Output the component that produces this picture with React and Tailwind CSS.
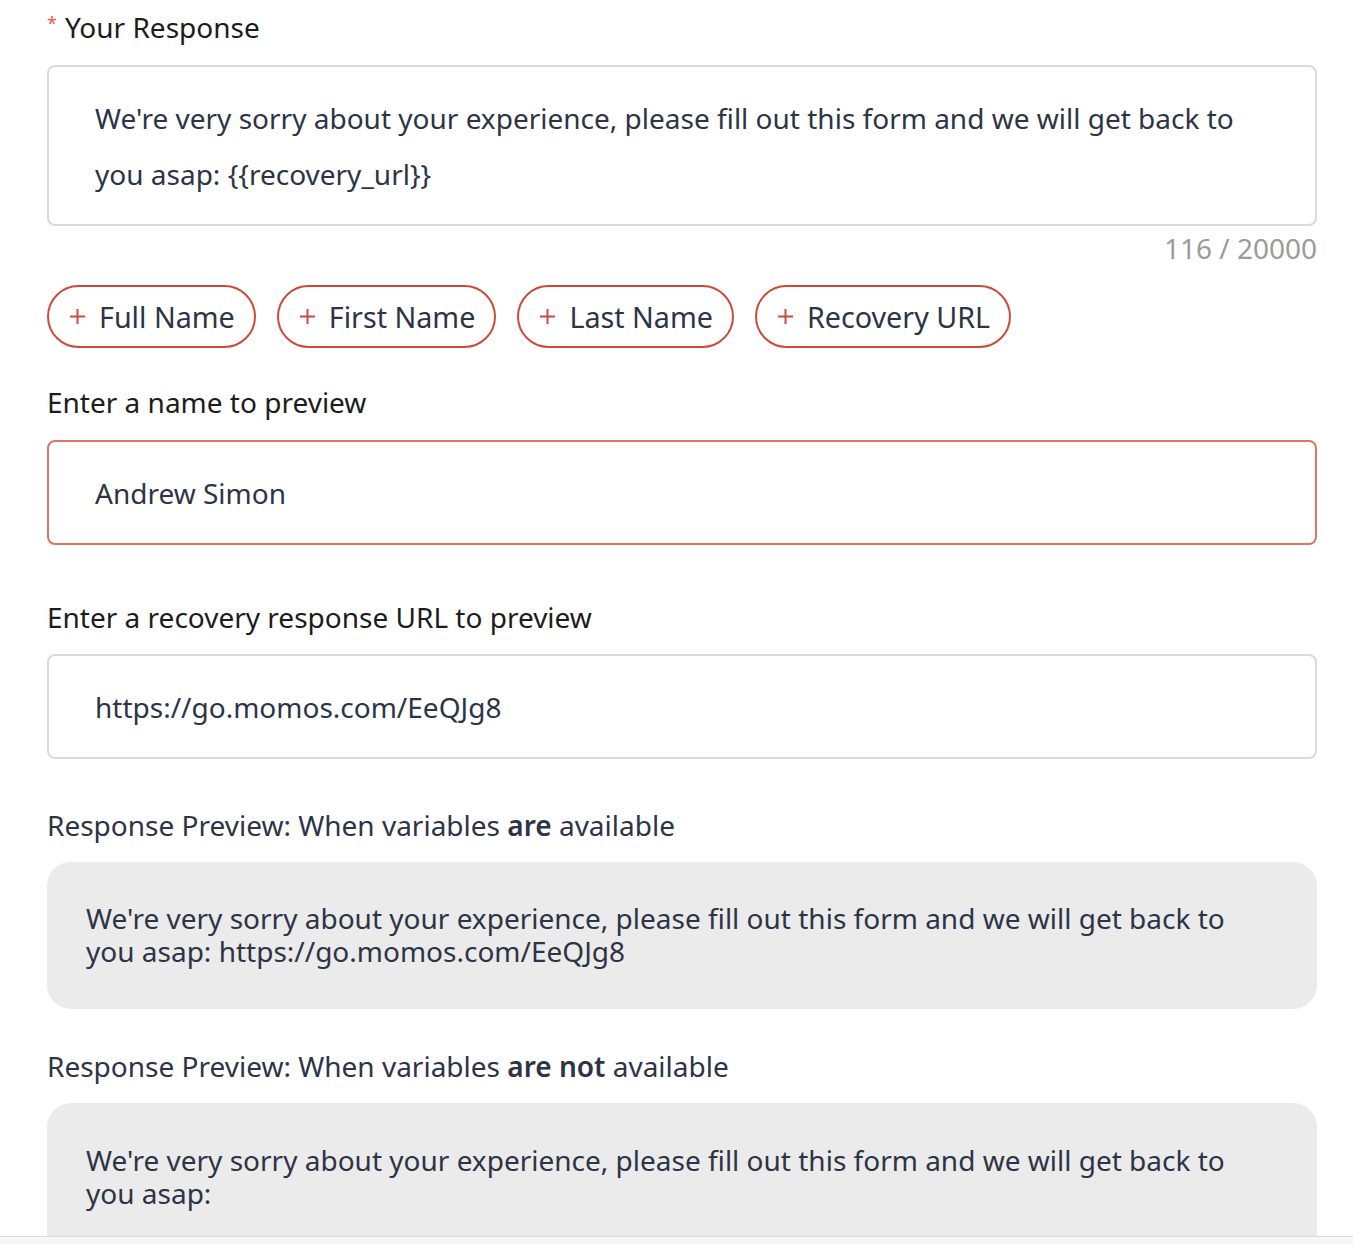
const chips = ['Full Name', 'First Name', 'Last Name', 'Recovery URL']

const message =
  "We're very sorry about your experience, please fill out this form and we will get back to you asap:"

function Chip({ label }) {
  return (
    <button className="inline-flex h-[63px] items-center gap-[13px] rounded-full border-2 border-[#cc4a3b] bg-white pl-[20px] pr-[19px] text-[28.7px] text-[#2d3446]">
      <svg width="17" height="17" viewBox="0 0 17 17" className="text-[#cc4a3b]">
        <path d="M8.5 1v15M1 8.5h15" stroke="currentColor" strokeWidth="2" />
      </svg>
      {label}
    </button>
  )
}

export default function App() {
  return (
    <div className="min-h-[1245px] bg-white font-['Noto_Sans',sans-serif]">
      <div className="ml-[47px] w-[1270px] pt-[7px]">
        <label className="flex items-center gap-[8px] text-[28px] leading-[40px] text-[#1c1c1c]">
          <span className="-mt-[8px] text-[18px] text-[#f05a4f]">*</span>
          Your Response
        </label>

        <div className="mt-[18px] h-[161px] rounded-[8px] border-2 border-[#dadada] px-[46px] pt-[23px] text-[28px] leading-[56px] text-[#2d3446]">
          {message} {'{{recovery_url}}'}
        </div>
        <p className="mt-[4px] text-right text-[28px] leading-[36px] text-[#9b9b9b]">116 / 20000</p>

        <div className="mt-[19px] flex gap-[21px]">
          {chips.map((c) => (
            <Chip key={c} label={c} />
          ))}
        </div>

        <p className="mt-[36px] text-[28px] leading-[36px] text-[#1c1c1c]">Enter a name to preview</p>
        <div className="mt-[20px] flex h-[105px] items-center rounded-[8px] border-2 border-[#dc7563] px-[46px] text-[28px] text-[#2d3446]">
          Andrew Simon
        </div>

        <p className="mt-[54px] text-[28px] leading-[36px] text-[#1c1c1c]">Enter a recovery response URL to preview</p>
        <div className="mt-[19px] flex h-[105px] items-center rounded-[8px] border-2 border-[#dadada] px-[46px] text-[28px] text-[#2d3446]">
          https://go.momos.com/EeQJg8
        </div>

        <p className="mt-[48px] text-[28px] leading-[36px] text-[#2d3446]">
          Response Preview: When variables <span className="font-semibold">are</span> available
        </p>
        <div className="mt-[19px] h-[147px] rounded-[24px] bg-[#ebebeb] px-[39px] pt-[40px] text-[28px] leading-[33px] text-[#2d3446]">
          {message} https://go.momos.com/EeQJg8
        </div>

        <p className="mt-[39px] text-[28px] leading-[36px] text-[#2d3446]">
          Response Preview: When variables <span className="font-semibold">are not</span> available
        </p>
        <div className="mt-[19px] h-[133px] rounded-t-[24px] bg-[#ebebeb] px-[39px] pt-[41px] text-[28px] leading-[33px] text-[#2d3446]">
          {message}
        </div>
      </div>
      <div className="h-[8px] border-t border-[#dcdcdc] bg-[#f7f7f7]" />
    </div>
  )
}
